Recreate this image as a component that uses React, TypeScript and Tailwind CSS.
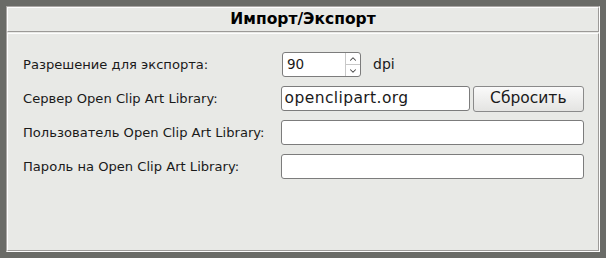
import { ChevronUp, ChevronDown } from 'lucide-react'

const rows = [
  { label: 'Пользователь Open Clip Art Library:' },
  { label: 'Пароль на Open Clip Art Library:' },
]

function App() {
  return (
    <div
      className="w-[606px] h-[258px] bg-[#6a6b67] p-[6px] text-[#1a1a1a]"
      style={{ fontFamily: '"DejaVu Sans", "Noto Sans", sans-serif' }}
    >
      <div className="h-full flex flex-col bg-[#e8e9e6] border border-[#a9a6a4] border-r-[#fdfdfd] border-b-[#fdfdfd]">
        <div className="h-[25px] flex items-center justify-center border border-[#9c9a98] border-t-[#fdfdfd] border-l-[#fdfdfd] bg-[#e8e9e6]">
          <span className="text-[15.5px] font-bold text-black">Импорт/Экспорт</span>
        </div>
        <div className="flex-1 border border-[#fdfdfd] border-r-[#9c9a98] border-b-[#9c9a98] mt-px pl-[15px] pr-[14px] pt-[18px] flex flex-col gap-[9px] text-[13.1px]">
          <div className="flex items-center h-[25px]">
            <span className="w-[259px]">Разрешение для экспорта:</span>
            <div className="w-[79px] h-[25px] bg-white border border-[#7c7c7c] rounded-[3px] flex items-center">
              <span className="flex-1 pl-[4px] text-[13.5px]">90</span>
              <div className="w-[15px] h-full flex flex-col border-l border-[#c8c8c8] text-[#444]">
                <div className="flex-1 flex items-center justify-center border-b border-[#c8c8c8]">
                  <ChevronUp size={10} strokeWidth={2.5} />
                </div>
                <div className="flex-1 flex items-center justify-center">
                  <ChevronDown size={10} strokeWidth={2.5} />
                </div>
              </div>
            </div>
            <span className="ml-[12px] text-[14px]">dpi</span>
          </div>
          <div className="flex items-center h-[25px]">
            <span className="w-[259px]">Сервер Open Clip Art Library:</span>
            <div className="w-[190px] h-[25px] bg-white border border-[#7c7c7c] rounded-[3px] flex items-center pl-[3px] text-[15.5px] tracking-[0.4px]">
              openclipart.org
            </div>
            <button className="ml-[3px] w-[112px] h-[26px] rounded-[3px] border border-[#8a8a8a] bg-gradient-to-b from-[#fafafa] to-[#e4e4e2] text-[15.5px]">
              Сбросить
            </button>
          </div>
          {rows.map((r, i) => (
            <div key={i} className="flex items-center h-[25px]">
              <span className="w-[259px]">{r.label}</span>
              <div className="w-[305px] h-[25px] bg-white border border-[#7c7c7c] rounded-[3px]" />
            </div>
          ))}
        </div>
      </div>
    </div>
  )
}

export default App
